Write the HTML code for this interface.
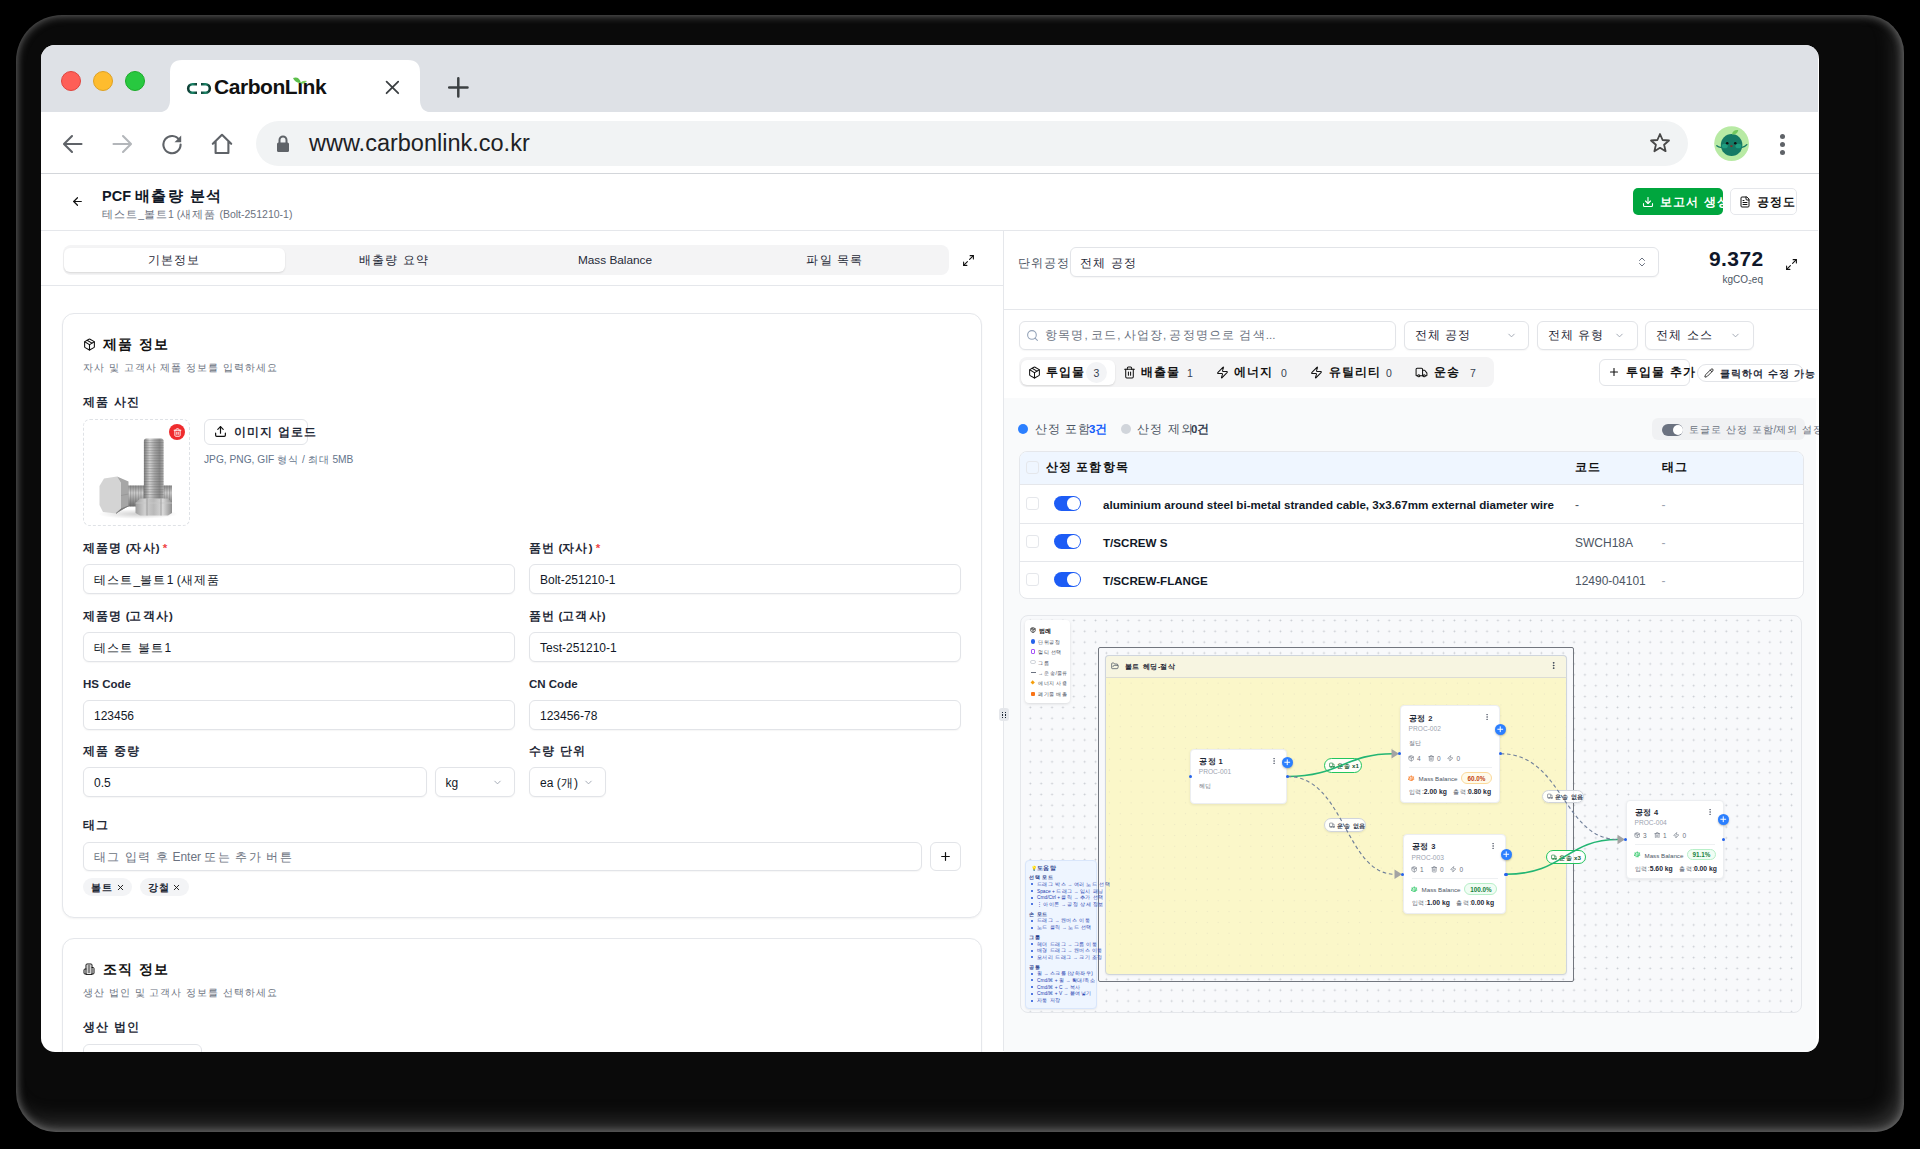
<!DOCTYPE html>
<html><head><meta charset="utf-8">
<style>
*{box-sizing:border-box;margin:0;padding:0}
html,body{width:1920px;height:1149px;overflow:hidden;background:#000}
body{font-family:"Liberation Sans",sans-serif;color:#111827;position:relative}
.a{position:absolute}
.t{white-space:nowrap;line-height:1}
.b{font-weight:bold}
.k{letter-spacing:.1em}
#win{left:41px;top:45px;width:1778px;height:1006.5px;border-radius:14px;overflow:hidden;background:#fff}
#in{left:-41px;top:-45px;width:1920px;height:1149px}
.inp{border:1px solid #e2e4e8;border-radius:6px;background:#fff;box-shadow:0 1px 1.5px rgba(0,0,0,.04)}
</style></head><body>

<div class="a" style="left:16px;top:15px;width:1888px;height:1117px;border-radius:46px 38px 28px 40px;background:#0a0a0a;box-shadow:inset 0 0 9px 1px rgba(140,140,140,.7),inset -10px -14px 22px -6px rgba(120,120,120,.45)"></div>
<div class="a" id="win"><div class="a" id="in">
<div class="a" style="left:41px;top:45px;width:1777px;height:67px;background:#dee1e6"></div>
<div class="a" style="left:61px;top:71px;width:20px;height:20px;border-radius:50%;background:#fe5f57;border:.5px solid #e0443e"></div>
<div class="a" style="left:93px;top:71px;width:20px;height:20px;border-radius:50%;background:#febc2e;border:.5px solid #dea123"></div>
<div class="a" style="left:125px;top:71px;width:20px;height:20px;border-radius:50%;background:#28c840;border:.5px solid #1aab29"></div>
<svg class="a" style="left:150px;top:58px" width="290" height="56" viewBox="150 58 290 56"><path d="M157 112.5 Q170 112.5 170 100 L170 72 Q170 60 182 60 L408 60 Q420 60 420 72 L420 100 Q420 112.5 433 112.5 Z" fill="#fff"/></svg>
<svg class="a" style="left:186px;top:82px" width="26" height="13" viewBox="0 0 26 13"><defs><linearGradient id="lg" x1="0" x2="1"><stop offset="0" stop-color="#0f3d34"/><stop offset=".5" stop-color="#1b8a6b"/><stop offset="1" stop-color="#11352d"/></linearGradient></defs><path d="M11 2.2 H6.5 A4.3 4.3 0 0 0 6.5 10.8 H11" fill="none" stroke="url(#lg)" stroke-width="2.6"/><path d="M15 2.2 H19.5 A4.3 4.3 0 0 1 19.5 10.8 H15" fill="none" stroke="url(#lg)" stroke-width="2.6"/></svg>
<div class="a t b" style="left:214px;top:76px;font-size:21px;color:#111;letter-spacing:-.45px">CarbonL<span style="position:relative">ı</span>nk</div>
<svg class="a" style="left:290px;top:76px" width="18" height="11" viewBox="0 0 18 11"><path d="M3 2 Q9 0 11 7 Q5 7 3 2Z" fill="#5cbf4a"/><path d="M10 7 Q13 4 17 5 Q14 9 10 7Z" fill="#7bcf5c"/></svg>
<svg class="a" style="left:380px;top:75px" width="24" height="24" viewBox="380 75 24 24"><path d="M386.6 81.6 L398.2 93.2 M398.2 81.6 L386.6 93.2" stroke="#3c4043" stroke-width="1.8" stroke-linecap="round"/></svg>
<svg class="a" style="left:440px;top:70px" width="36" height="36" viewBox="440 70 36 36"><path d="M458.3 78.3 V96.6 M449.2 87.4 H467.5" stroke="#3c4043" stroke-width="2.5" stroke-linecap="round"/></svg>
<div class="a" style="left:41px;top:112px;width:1778px;height:62px;background:#fff;border-bottom:1.2px solid #d3d6da"></div>
<div class="a" style="left:256px;top:121px;width:1432px;height:45px;border-radius:23px;background:#f1f3f4"></div>
<div class="a t" style="left:309px;top:132px;font-size:23.5px;color:#202124">www.carbonlink.co.kr</div>
<svg class="a" style="left:62px;top:134px" width="21" height="20" viewBox="0 0 21 20"><path d="M19.5 10 H2.5 M10 2 L2 10 L10 18" fill="none" stroke="#5f6368" stroke-width="2.1" stroke-linecap="round" stroke-linejoin="round"/></svg>
<svg class="a" style="left:112px;top:134px" width="21" height="20" viewBox="0 0 21 20"><path d="M1.5 10 H18.5 M11 2 L19 10 L11 18" fill="none" stroke="#b3b6ba" stroke-width="2.1" stroke-linecap="round" stroke-linejoin="round"/></svg>
<svg class="a" style="left:161px;top:133px" width="22" height="22" viewBox="0 0 22 22"><path d="M18.3 7 A8.6 8.6 0 1 0 19.6 11.5" fill="none" stroke="#5f6368" stroke-width="2.1" stroke-linecap="round"/><path d="M20.2 2.5 V9.2 H13.5 Z" fill="#5f6368"/></svg>
<svg class="a" style="left:211px;top:133px" width="22" height="22" viewBox="0 0 22 22"><path d="M1.8 10.8 L11 1.8 L20.2 10.8 M4.6 8.6 V20 H17.4 V8.6" fill="none" stroke="#5f6368" stroke-width="2.1" stroke-linejoin="round" stroke-linecap="round"/></svg>
<svg class="a" style="left:276px;top:135px" width="14" height="18" viewBox="0 0 14 18"><path d="M3.5 8 V5 A3.5 3.5 0 0 1 10.5 5 V8" fill="none" stroke="#5f6368" stroke-width="2"/><rect x="1" y="7.5" width="12" height="9.5" rx="1.5" fill="#5f6368"/></svg>
<svg class="a" style="left:1649px;top:132px" width="22" height="22" viewBox="0 0 22 22"><path d="M11 2 L13.6 8 L20 8.5 L15.1 12.7 L16.6 19.2 L11 15.8 L5.4 19.2 L6.9 12.7 L2 8.5 L8.4 8 Z" fill="none" stroke="#474747" stroke-width="1.8" stroke-linejoin="round"/></svg>
<svg class="a" style="left:1710px;top:122px" width="45" height="44" viewBox="1710 122 45 44"><circle cx="1731.6" cy="143.6" r="17.4" fill="#b8eaa4"/><path d="M1716.8 145.8 Q1719 147.8 1721.5 147.3 M1742 147.3 Q1745 146.8 1746.8 144.6" fill="none" stroke="#157a65" stroke-width="1.3" stroke-linecap="round"/><ellipse cx="1731.6" cy="145" rx="10.8" ry="11.1" fill="#157a65"/><ellipse cx="1724.8" cy="146" rx="3" ry="2.3" fill="#1f9d7f"/><ellipse cx="1738.4" cy="146" rx="3" ry="2.3" fill="#1f9d7f"/><circle cx="1727.2" cy="143.3" r="1.3" fill="#111"/><circle cx="1735.3" cy="143.3" r="1.3" fill="#111"/><path d="M1730.1 145.6 H1732.7 A1.3 1.3 0 0 1 1730.1 145.6Z" fill="#a01818"/><path d="M1732 134.5 Q1732.5 129.5 1738.3 130 Q1737.5 134.5 1732 134.5Z" fill="#72c85e"/></svg>
<div class="a" style="left:1780px;top:134px;width:5px;height:5px;border-radius:50%;background:#5f6368;box-shadow:0 8px 0 #5f6368,0 16px 0 #5f6368"></div>
<div class="a" style="left:41px;top:174px;width:1777px;height:57px;background:#fff;border-bottom:1px solid #e5e7eb"></div>
<svg class="a" style="left:70.5px;top:194.5px" width="13" height="13" viewBox="0 0 24 24" fill="none" stroke="#111" stroke-width="2.2" stroke-linecap="round" stroke-linejoin="round" ><path d="m12 19-7-7 7-7"/><path d="M19 12H5"/></svg>
<div class="a t" style="left:102px;top:188.54px;font-size:14.5px;font-weight:bold;color:#111827">PCF <span class="k">배출량 분석</span></div>
<div class="a t" style="left:102px;top:208.76px;font-size:10.5px;color:#6b7280"><span class="k">테스트</span>_<span class="k">볼트</span>1 (<span class="k">새제품</span> (Bolt-251210-1)</div>
<div class="a" style="left:1633px;top:188px;width:89.5px;height:27px;border-radius:5px;background:#00a63e"></div>
<svg class="a" style="left:1642.0px;top:195.5px" width="12" height="12" viewBox="0 0 24 24" fill="none" stroke="#fff" stroke-width="2.2" stroke-linecap="round" stroke-linejoin="round" ><path d="M21 15v4a2 2 0 0 1-2 2H5a2 2 0 0 1-2-2v-4"/><path d="M7 10l5 5 5-5"/><path d="M12 15V3"/></svg>
<div class="a t" style="left:1660px;top:196.78px;font-size:11.5px;color:#fff;font-weight:bold"><span class="k">보고서 생성</span></div>
<div class="a" style="left:1730px;top:188px;width:67px;height:27px;border-radius:5px;background:#fff;border:1px solid #e5e7eb"></div>
<svg class="a" style="left:1739.0px;top:195.5px" width="12" height="12" viewBox="0 0 24 24" fill="none" stroke="#111" stroke-width="2" stroke-linecap="round" stroke-linejoin="round" ><path d="M15 2H6a2 2 0 0 0-2 2v16a2 2 0 0 0 2 2h12a2 2 0 0 0 2-2V7Z"/><path d="M14 2v4a2 2 0 0 0 2 2h4"/><path d="M10 9H8"/><path d="M16 13H8"/><path d="M16 17H8"/></svg>
<div class="a t" style="left:1757px;top:196.78px;font-size:11.5px;color:#111;font-weight:bold"><span class="k">공정도</span></div>
<div class="a" style="left:62.5px;top:245px;width:886px;height:30px;border-radius:8px;background:#f4f4f5"></div>
<div class="a" style="left:64px;top:247.5px;width:220.5px;height:24.5px;border-radius:6px;background:#fff;box-shadow:0 1px 2px rgba(0,0,0,.12)"></div>
<div class="a t" style="left:-226px;width:800px;text-align:center;top:254.64px;font-size:11.8px;color:#1f2937"><span class="k">기본정보</span></div>
<div class="a t" style="left:-6px;width:800px;text-align:center;top:254.64px;font-size:11.8px;color:#1f2937"><span class="k">배출량 요약</span></div>
<div class="a t" style="left:215px;width:800px;text-align:center;top:254.64px;font-size:11.8px;color:#1f2937">Mass Balance</div>
<div class="a t" style="left:435px;width:800px;text-align:center;top:254.64px;font-size:11.8px;color:#1f2937"><span class="k">파일 목록</span></div>
<svg class="a" style="left:962.0px;top:253.5px" width="13" height="13" viewBox="0 0 24 24" fill="none" stroke="#111" stroke-width="2" stroke-linecap="round" stroke-linejoin="round" ><path d="M15 3h6v6"/><path d="M9 21H3v-6"/><path d="M21 3l-7 7"/><path d="M3 21l7-7"/></svg>
<div class="a" style="left:41px;top:285px;width:962px;height:1px;background:#e5e7eb"></div>
<div class="a" style="left:1003px;top:231px;width:1px;height:820px;background:#e5e7eb"></div>
<div class="a" style="left:62px;top:313px;width:920px;height:605px;border-radius:12px;border:1px solid #e5e7eb;box-shadow:0 1px 2px rgba(0,0,0,.05);background:#fff"></div>
<svg class="a" style="left:82.5px;top:337.5px" width="13" height="13" viewBox="0 0 24 24" fill="none" stroke="#111" stroke-width="2" stroke-linecap="round" stroke-linejoin="round" ><path d="M11 21.73a2 2 0 0 0 2 0l7-4A2 2 0 0 0 21 16V8a2 2 0 0 0-1-1.73l-7-4a2 2 0 0 0-2 0l-7 4A2 2 0 0 0 3 8v8a2 2 0 0 0 1 1.73z"/><path d="M12 22V12"/><path d="m3.3 7 7.703 4.734a2 2 0 0 0 1.994 0L20.7 7"/><path d="m7.5 4.27 9 5.15"/></svg>
<div class="a t" style="left:103px;top:338.32px;font-size:13.5px;font-weight:bold;color:#111"><span class="k">제품 정보</span></div>
<div class="a t" style="left:83px;top:363.0px;font-size:10px;color:#6b7280"><span class="k">자사 및 고객사 제품 정보를 입력하세요</span></div>
<div class="a t" style="left:83px;top:397.28px;font-size:11.5px;font-weight:bold;color:#1f2937"><span class="k">제품 사진</span></div>
<div class="a" style="left:83px;top:419px;width:107px;height:107px;border:1.5px dashed #dfe2e6;border-radius:7px;background:#fff"></div>
<svg class="a" style="left:84px;top:420px" width="105" height="105" viewBox="84 420 105 105">
<defs>
<linearGradient id="sh" x1="0" x2="1"><stop offset="0" stop-color="#7c7c7c"/><stop offset=".3" stop-color="#d6d6d6"/><stop offset=".55" stop-color="#a8a8a8"/><stop offset=".8" stop-color="#8a8a8a"/><stop offset="1" stop-color="#b0b0b0"/></linearGradient>
<linearGradient id="sh2" x1="0" x2="0" y1="0" y2="1"><stop offset="0" stop-color="#8a8a8a"/><stop offset=".35" stop-color="#d2d2d2"/><stop offset=".7" stop-color="#9a9a9a"/><stop offset="1" stop-color="#6f6f6f"/></linearGradient>
<linearGradient id="hd" x1="0" x2="1"><stop offset="0" stop-color="#9d9d9d"/><stop offset=".25" stop-color="#cfcfcf"/><stop offset=".5" stop-color="#b9b9b9"/><stop offset=".75" stop-color="#d9d9d9"/><stop offset="1" stop-color="#8e8e8e"/></linearGradient>
<pattern id="thv" width="20" height="2.6" patternUnits="userSpaceOnUse"><rect width="20" height="1.2" fill="#5e5e5e" opacity=".35"/></pattern>
<pattern id="thh" width="2.6" height="20" patternUnits="userSpaceOnUse"><rect width="1.2" height="20" fill="#5e5e5e" opacity=".35"/></pattern>
<radialGradient id="shd" cx=".5" cy=".5" r=".5"><stop offset="0" stop-color="#000" stop-opacity=".18"/><stop offset="1" stop-color="#000" stop-opacity="0"/></radialGradient>
</defs>
<ellipse cx="138" cy="514" rx="40" ry="5" fill="url(#shd)"/>
<rect x="126" y="485.5" width="46" height="21" fill="url(#sh2)"/>
<rect x="126" y="485.5" width="46" height="21" fill="url(#thh)"/>
<path d="M104 478.5 L117 476.5 L121 483 L121 509 L116 513.5 L103 512 L99.5 505 L99.5 486 Z" fill="#d4d4d4"/>
<path d="M117 476.5 L128.5 481.5 L128.5 506 L116 513.5 L121 509 L121 483 Z" fill="#a6a6a6"/>
<path d="M121 495.5 L128.5 494" stroke="#8f8f8f" stroke-width=".6"/>
<path d="M116 513.5 L121 509 L128.5 506" fill="#7d7d7d" stroke="#7d7d7d" stroke-width="1"/>
<rect x="143.9" y="438.6" width="19.7" height="62" rx="2.5" fill="url(#sh)"/>
<rect x="143.9" y="440" width="19.7" height="60" fill="url(#thv)"/>
<path d="M140 498.5 L168 498.5 L172 503 L172 513 L168 515.5 L140 515.5 L135.5 513 L135.5 503 Z" fill="url(#hd)"/>
<path d="M135.5 503 H172" stroke="#c8c8c8" stroke-width=".8"/>
<path d="M147 498.5 V515.5 M161 498.5 V515.5" stroke="#8d8d8d" stroke-width=".7"/>
</svg>
<div class="a" style="left:169px;top:424px;width:16px;height:16px;border-radius:50%;background:#ef2b2d"></div>
<svg class="a" style="left:172.5px;top:427.5px" width="9" height="9" viewBox="0 0 24 24" fill="none" stroke="#fff" stroke-width="2.4" stroke-linecap="round" stroke-linejoin="round" ><path d="M3 6h18"/><path d="M19 6v14c0 1-1 2-2 2H7c-1 0-2-1-2-2V6"/><path d="M8 6V4c0-1 1-2 2-2h4c1 0 2 1 2 2v2"/><path d="M10 11v6"/><path d="M14 11v6"/></svg>
<div class="a" style="left:204px;top:419px;width:103.5px;height:26px;border:1px solid #e2e4e8;border-radius:6px;background:#fff"></div>
<svg class="a" style="left:213.5px;top:425.0px" width="13" height="13" viewBox="0 0 24 24" fill="none" stroke="#111" stroke-width="2.2" stroke-linecap="round" stroke-linejoin="round" ><path d="M21 15v4a2 2 0 0 1-2 2H5a2 2 0 0 1-2-2v-4"/><path d="M17 8l-5-5-5 5"/><path d="M12 3v12"/></svg>
<div class="a t" style="left:234px;top:426.78px;font-size:11.5px;font-weight:bold;color:#1f2937"><span class="k">이미지 업로드</span></div>
<div class="a t" style="left:204px;top:454.9px;font-size:10.2px;color:#64748b">JPG, PNG, GIF <span class="k">형식</span> / <span class="k">최대</span> 5MB</div>
<div class="a t" style="left:83px;top:543.28px;font-size:11.5px;font-weight:bold;color:#1f2937"><span class="k">제품명</span> (<span class="k">자사</span>) <i style="color:#ef4444;font-style:normal">*</i></div>
<div class="a t" style="left:529px;top:543.28px;font-size:11.5px;font-weight:bold;color:#1f2937"><span class="k">품번</span> (<span class="k">자사</span>) <i style="color:#ef4444;font-style:normal">*</i></div>
<div class="a" style="left:83px;top:564px;width:431.5px;height:30px;border:1px solid #e2e4e8;border-radius:6px;background:#fff;box-shadow:0 1px 1.5px rgba(0,0,0,.04)"></div>
<div class="a t" style="left:94px;top:574.04px;font-size:12px;color:#111827"><span class="k">테스트</span>_<span class="k">볼트</span>1 (<span class="k">새제품</span></div>
<div class="a" style="left:529px;top:564px;width:431.5px;height:30px;border:1px solid #e2e4e8;border-radius:6px;background:#fff;box-shadow:0 1px 1.5px rgba(0,0,0,.04)"></div>
<div class="a t" style="left:540px;top:574.04px;font-size:12px;color:#111827">Bolt-251210-1</div>
<div class="a t" style="left:83px;top:610.98px;font-size:11.5px;font-weight:bold;color:#1f2937"><span class="k">제품명</span> (<span class="k">고객사</span>)</div>
<div class="a t" style="left:529px;top:610.98px;font-size:11.5px;font-weight:bold;color:#1f2937"><span class="k">품번</span> (<span class="k">고객사</span>)</div>
<div class="a" style="left:83px;top:631.5px;width:431.5px;height:30px;border:1px solid #e2e4e8;border-radius:6px;background:#fff;box-shadow:0 1px 1.5px rgba(0,0,0,.04)"></div>
<div class="a t" style="left:94px;top:641.54px;font-size:12px;color:#111827"><span class="k">테스트 볼트</span>1</div>
<div class="a" style="left:529px;top:631.5px;width:431.5px;height:30px;border:1px solid #e2e4e8;border-radius:6px;background:#fff;box-shadow:0 1px 1.5px rgba(0,0,0,.04)"></div>
<div class="a t" style="left:540px;top:641.54px;font-size:12px;color:#111827">Test-251210-1</div>
<div class="a t" style="left:83px;top:678.68px;font-size:11.5px;font-weight:bold;color:#1f2937">HS Code</div>
<div class="a t" style="left:529px;top:678.68px;font-size:11.5px;font-weight:bold;color:#1f2937">CN Code</div>
<div class="a" style="left:83px;top:699.5px;width:431.5px;height:30px;border:1px solid #e2e4e8;border-radius:6px;background:#fff;box-shadow:0 1px 1.5px rgba(0,0,0,.04)"></div>
<div class="a t" style="left:94px;top:709.54px;font-size:12px;color:#111827">123456</div>
<div class="a" style="left:529px;top:699.5px;width:431.5px;height:30px;border:1px solid #e2e4e8;border-radius:6px;background:#fff;box-shadow:0 1px 1.5px rgba(0,0,0,.04)"></div>
<div class="a t" style="left:540px;top:709.54px;font-size:12px;color:#111827">123456-78</div>
<div class="a t" style="left:83px;top:746.08px;font-size:11.5px;font-weight:bold;color:#1f2937"><span class="k">제품 중량</span></div>
<div class="a t" style="left:529px;top:746.08px;font-size:11.5px;font-weight:bold;color:#1f2937"><span class="k">수량 단위</span></div>
<div class="a" style="left:83px;top:767px;width:343.5px;height:30px;border:1px solid #e2e4e8;border-radius:6px;background:#fff;box-shadow:0 1px 1.5px rgba(0,0,0,.04)"></div>
<div class="a t" style="left:94px;top:777.04px;font-size:12px;color:#111827">0.5</div>
<div class="a" style="left:434.5px;top:767px;width:80px;height:30px;border:1px solid #e2e4e8;border-radius:6px;background:#fff;box-shadow:0 1px 1.5px rgba(0,0,0,.04)"></div>
<div class="a t" style="left:445.5px;top:777.04px;font-size:12px;color:#111827">kg</div>
<svg class="a" style="left:492.0px;top:776.5px" width="11" height="11" viewBox="0 0 24 24" fill="none" stroke="#9ca3af" stroke-width="2" stroke-linecap="round" stroke-linejoin="round" ><path d="m6 9 6 6 6-6"/></svg>
<div class="a" style="left:529px;top:767px;width:76.5px;height:30px;border:1px solid #e2e4e8;border-radius:6px;background:#fff;box-shadow:0 1px 1.5px rgba(0,0,0,.04)"></div>
<div class="a t" style="left:540px;top:777.04px;font-size:12px;color:#111827">ea (<span class="k">개</span>)</div>
<svg class="a" style="left:583.0px;top:776.5px" width="11" height="11" viewBox="0 0 24 24" fill="none" stroke="#9ca3af" stroke-width="2" stroke-linecap="round" stroke-linejoin="round" ><path d="m6 9 6 6 6-6"/></svg>
<div class="a t" style="left:83px;top:820.28px;font-size:11.5px;font-weight:bold;color:#1f2937"><span class="k">태그</span></div>
<div class="a" style="left:83px;top:841.5px;width:838.5px;height:29.5px;border:1px solid #e2e4e8;border-radius:6px;background:#fff;box-shadow:0 1px 1.5px rgba(0,0,0,.04)"></div>
<div class="a t" style="left:94px;top:851.29px;font-size:12px;color:#6b7280"><span class="k">태그 입력 후</span> Enter <span class="k">또는 추가 버튼</span></div>
<div class="a" style="left:929.5px;top:841.5px;width:31px;height:29.5px;border:1px solid #e2e4e8;border-radius:6px;background:#fff"></div>
<svg class="a" style="left:938.5px;top:849.5px" width="13" height="13" viewBox="0 0 24 24" fill="none" stroke="#111" stroke-width="2.2" stroke-linecap="round" stroke-linejoin="round" ><path d="M5 12h14"/><path d="M12 5v14"/></svg>
<div class="a" style="left:83px;top:878px;width:49px;height:18px;border-radius:9px;background:#f3f4f6"></div>
<div class="a t" style="left:91px;top:883.0px;font-size:10px;font-weight:bold;color:#1f2937"><span class="k">볼트</span></div>
<svg class="a" style="left:115.5px;top:882.5px" width="9" height="9" viewBox="0 0 24 24" fill="none" stroke="#111" stroke-width="2.4" stroke-linecap="round" stroke-linejoin="round" ><path d="M18 6 6 18"/><path d="m6 6 12 12"/></svg>
<div class="a" style="left:139.5px;top:878px;width:49px;height:18px;border-radius:9px;background:#f3f4f6"></div>
<div class="a t" style="left:147.5px;top:883.0px;font-size:10px;font-weight:bold;color:#1f2937"><span class="k">강철</span></div>
<svg class="a" style="left:172.0px;top:882.5px" width="9" height="9" viewBox="0 0 24 24" fill="none" stroke="#111" stroke-width="2.4" stroke-linecap="round" stroke-linejoin="round" ><path d="M18 6 6 18"/><path d="m6 6 12 12"/></svg>
<div class="a" style="left:62px;top:938px;width:920px;height:200px;border-radius:12px;border:1px solid #e5e7eb;box-shadow:0 1px 2px rgba(0,0,0,.05);background:#fff"></div>
<svg class="a" style="left:83.0px;top:963.0px" width="12" height="12" viewBox="0 0 24 24" fill="none" stroke="#111" stroke-width="2" stroke-linecap="round" stroke-linejoin="round" ><path d="M6 22V4a2 2 0 0 1 2-2h8a2 2 0 0 1 2 2v18Z"/><path d="M6 12H4a2 2 0 0 0-2 2v6a2 2 0 0 0 2 2h2"/><path d="M18 9h2a2 2 0 0 1 2 2v9a2 2 0 0 1-2 2h-2"/><path d="M10 6h4"/><path d="M10 10h4"/><path d="M10 14h4"/><path d="M10 18h4"/></svg>
<div class="a t" style="left:103px;top:963.32px;font-size:13.5px;font-weight:bold;color:#111"><span class="k">조직 정보</span></div>
<div class="a t" style="left:83px;top:988.0px;font-size:10px;color:#6b7280"><span class="k">생산 법인 및 고객사 정보를 선택하세요</span></div>
<div class="a t" style="left:83px;top:1022.28px;font-size:11.5px;font-weight:bold;color:#1f2937"><span class="k">생산 법인</span></div>
<div class="a" style="left:83px;top:1044px;width:119px;height:30px;border:1px solid #e2e4e8;border-radius:6px;background:#fff"></div>
<div class="a t" style="left:1017.5px;top:256.54px;font-size:12px;color:#4b5563"><span class="k">단위공정</span>:</div>
<div class="a" style="left:1069.5px;top:246.5px;width:589.5px;height:30px;border:1px solid #e2e4e8;border-radius:6px;background:#fff;box-shadow:0 1px 1.5px rgba(0,0,0,.04)"></div>
<div class="a t" style="left:1080px;top:256.54px;font-size:12px;color:#1f2937"><span class="k">전체 공정</span></div>
<svg class="a" style="left:1635.5px;top:255.5px" width="12" height="12" viewBox="0 0 24 24" fill="none" stroke="#6b7280" stroke-width="2" stroke-linecap="round" stroke-linejoin="round" ><path d="m7 15 5 5 5-5"/><path d="m7 9 5-5 5 5"/></svg>
<div class="a t" style="left:963.5999999999999px;width:800px;text-align:right;top:247.72px;font-size:21px;font-weight:bold;color:#0f172a;letter-spacing:.4px">9.372</div>
<div class="a t" style="left:963px;width:800px;text-align:right;top:274.5px;font-size:10px;color:#4b5563">kgCO₂eq</div>
<svg class="a" style="left:1784.5px;top:258.0px" width="13" height="13" viewBox="0 0 24 24" fill="none" stroke="#111" stroke-width="2" stroke-linecap="round" stroke-linejoin="round" ><path d="M15 3h6v6"/><path d="M9 21H3v-6"/><path d="M21 3l-7 7"/><path d="M3 21l7-7"/></svg>
<div class="a" style="left:1004px;top:309px;width:814px;height:1px;background:#e5e7eb"></div>
<div class="a" style="left:1018.5px;top:320.5px;width:377px;height:29.5px;border:1px solid #e2e4e8;border-radius:6px;background:#fff;box-shadow:0 1px 1.5px rgba(0,0,0,.04)"></div>
<svg class="a" style="left:1026.0px;top:328.5px" width="13" height="13" viewBox="0 0 24 24" fill="none" stroke="#94a3b8" stroke-width="2" stroke-linecap="round" stroke-linejoin="round" ><circle cx="11" cy="11" r="8"/><path d="m21 21-4.3-4.3"/></svg>
<div class="a t" style="left:1045px;top:330.28px;font-size:11.5px;color:#6b7280"><span class="k">항목명</span>, <span class="k">코드</span>, <span class="k">사업장</span>, <span class="k">공정명으로 검색</span>...</div>
<div class="a" style="left:1403.5px;top:320.5px;width:125.5px;height:29.5px;border:1px solid #e2e4e8;border-radius:6px;background:#fff;box-shadow:0 1px 1.5px rgba(0,0,0,.04)"></div>
<div class="a t" style="left:1414.5px;top:330.28px;font-size:11.5px;color:#1f2937"><span class="k">전체 공정</span></div>
<svg class="a" style="left:1505.5px;top:329.5px" width="11" height="11" viewBox="0 0 24 24" fill="none" stroke="#9ca3af" stroke-width="2" stroke-linecap="round" stroke-linejoin="round" ><path d="m6 9 6 6 6-6"/></svg>
<div class="a" style="left:1536.5px;top:320.5px;width:101px;height:29.5px;border:1px solid #e2e4e8;border-radius:6px;background:#fff;box-shadow:0 1px 1.5px rgba(0,0,0,.04)"></div>
<div class="a t" style="left:1547.5px;top:330.28px;font-size:11.5px;color:#1f2937"><span class="k">전체 유형</span></div>
<svg class="a" style="left:1614.0px;top:329.5px" width="11" height="11" viewBox="0 0 24 24" fill="none" stroke="#9ca3af" stroke-width="2" stroke-linecap="round" stroke-linejoin="round" ><path d="m6 9 6 6 6-6"/></svg>
<div class="a" style="left:1645px;top:320.5px;width:108.5px;height:29.5px;border:1px solid #e2e4e8;border-radius:6px;background:#fff;box-shadow:0 1px 1.5px rgba(0,0,0,.04)"></div>
<div class="a t" style="left:1656px;top:330.28px;font-size:11.5px;color:#1f2937"><span class="k">전체 소스</span></div>
<svg class="a" style="left:1730.0px;top:329.5px" width="11" height="11" viewBox="0 0 24 24" fill="none" stroke="#9ca3af" stroke-width="2" stroke-linecap="round" stroke-linejoin="round" ><path d="m6 9 6 6 6-6"/></svg>
<div class="a" style="left:1018.5px;top:357px;width:475px;height:30px;border-radius:8px;background:#f4f4f5"></div>
<div class="a" style="left:1020.5px;top:360px;width:94.5px;height:24.5px;border-radius:6px;background:#fff;box-shadow:0 1px 2px rgba(0,0,0,.12)"></div>
<svg class="a" style="left:1028.0px;top:365.5px" width="13" height="13" viewBox="0 0 24 24" fill="none" stroke="#111" stroke-width="1.9" stroke-linecap="round" stroke-linejoin="round" ><path d="M11 21.73a2 2 0 0 0 2 0l7-4A2 2 0 0 0 21 16V8a2 2 0 0 0-1-1.73l-7-4a2 2 0 0 0-2 0l-7 4A2 2 0 0 0 3 8v8a2 2 0 0 0 1 1.73z"/><path d="M12 22V12"/><path d="m3.3 7 7.703 4.734a2 2 0 0 0 1.994 0L20.7 7"/><path d="m7.5 4.27 9 5.15"/></svg>
<div class="a t" style="left:1046px;top:367.28px;font-size:11.5px;font-weight:bold;color:#111"><span class="k">투입물</span></div>
<div class="a" style="left:1086px;top:362px;width:21px;height:21px;border-radius:50%;background:#f3f4f6"></div>
<div class="a t" style="left:696.5px;width:800px;text-align:center;top:367.76px;font-size:10.5px;color:#374151">3</div>
<svg class="a" style="left:1122.5px;top:365.5px" width="13" height="13" viewBox="0 0 24 24" fill="none" stroke="#111" stroke-width="1.9" stroke-linecap="round" stroke-linejoin="round" ><path d="M3 6h18"/><path d="M19 6v14c0 1-1 2-2 2H7c-1 0-2-1-2-2V6"/><path d="M8 6V4c0-1 1-2 2-2h4c1 0 2 1 2 2v2"/><path d="M10 11v6"/><path d="M14 11v6"/></svg>
<div class="a t" style="left:1141px;top:367.28px;font-size:11.5px;font-weight:bold;color:#111"><span class="k">배출물</span></div>
<div class="a t" style="left:790px;width:800px;text-align:center;top:367.76px;font-size:10.5px;color:#374151">1</div>
<svg class="a" style="left:1215.5px;top:365.5px" width="13" height="13" viewBox="0 0 24 24" fill="none" stroke="#111" stroke-width="1.9" stroke-linecap="round" stroke-linejoin="round" ><path d="M4 14a1 1 0 0 1-.78-1.63l9.9-10.2a.5.5 0 0 1 .86.46l-1.92 6.02A1 1 0 0 0 13 10h7a1 1 0 0 1 .78 1.63l-9.9 10.2a.5.5 0 0 1-.86-.46l1.92-6.02A1 1 0 0 0 11 14z"/></svg>
<div class="a t" style="left:1234px;top:367.28px;font-size:11.5px;font-weight:bold;color:#111"><span class="k">에너지</span></div>
<div class="a t" style="left:884px;width:800px;text-align:center;top:367.76px;font-size:10.5px;color:#374151">0</div>
<svg class="a" style="left:1309.5px;top:365.5px" width="13" height="13" viewBox="0 0 24 24" fill="none" stroke="#111" stroke-width="1.9" stroke-linecap="round" stroke-linejoin="round" ><path d="M4 14a1 1 0 0 1-.78-1.63l9.9-10.2a.5.5 0 0 1 .86.46l-1.92 6.02A1 1 0 0 0 13 10h7a1 1 0 0 1 .78 1.63l-9.9 10.2a.5.5 0 0 1-.86-.46l1.92-6.02A1 1 0 0 0 11 14z"/></svg>
<div class="a t" style="left:1329px;top:367.28px;font-size:11.5px;font-weight:bold;color:#111"><span class="k">유틸리티</span></div>
<div class="a t" style="left:989px;width:800px;text-align:center;top:367.76px;font-size:10.5px;color:#374151">0</div>
<svg class="a" style="left:1415.0px;top:365.5px" width="13" height="13" viewBox="0 0 24 24" fill="none" stroke="#111" stroke-width="1.9" stroke-linecap="round" stroke-linejoin="round" ><path d="M14 18V6a2 2 0 0 0-2-2H4a2 2 0 0 0-2 2v11a1 1 0 0 0 1 1h2"/><path d="M15 18H9"/><path d="M19 18h2a1 1 0 0 0 1-1v-3.65a1 1 0 0 0-.22-.624l-3.48-4.35A1 1 0 0 0 17.52 8H14"/><circle cx="17" cy="18" r="2"/><circle cx="7" cy="18" r="2"/></svg>
<div class="a t" style="left:1434px;top:367.28px;font-size:11.5px;font-weight:bold;color:#111"><span class="k">운송</span></div>
<div class="a t" style="left:1073px;width:800px;text-align:center;top:367.76px;font-size:10.5px;color:#374151">7</div>
<div class="a" style="left:1598.5px;top:359px;width:91px;height:26.5px;border:1px solid #e2e4e8;border-radius:6px;background:#fff"></div>
<svg class="a" style="left:1608.0px;top:366.0px" width="12" height="12" viewBox="0 0 24 24" fill="none" stroke="#111" stroke-width="2.2" stroke-linecap="round" stroke-linejoin="round" ><path d="M5 12h14"/><path d="M12 5v14"/></svg>
<div class="a t" style="left:1626px;top:367.28px;font-size:11.5px;font-weight:bold;color:#111"><span class="k">투입물 추가</span></div>
<div class="a" style="left:1697px;top:363.5px;width:106.5px;height:18px;border:1px solid #e2e4e8;border-radius:9px;background:#fff"></div>
<svg class="a" style="left:1703.5px;top:367.5px" width="10" height="10" viewBox="0 0 24 24" fill="none" stroke="#111" stroke-width="2" stroke-linecap="round" stroke-linejoin="round" ><path d="M21.174 6.812a1 1 0 0 0-3.986-3.987L3.842 16.174a2 2 0 0 0-.5.83l-1.321 4.352a.5.5 0 0 0 .623.622l4.353-1.32a2 2 0 0 0 .83-.497z"/><path d="m15 5 4 4"/></svg>
<div class="a t" style="left:1720px;top:368.5px;font-size:10px;font-weight:bold;color:#1f2937"><span class="k">클릭하여 수정 가능</span></div>
<div class="a" style="left:1004px;top:397.5px;width:812px;height:654px;background:#f9fafb"></div>
<div class="a" style="left:1017.5px;top:423.5px;width:10px;height:10px;border-radius:50%;background:#2b7fff"></div>
<div class="a t" style="left:1034.5px;top:423.78px;font-size:11.5px;color:#4b5563"><span class="k">산정 포함</span>:</div>
<div class="a t" style="left:1089px;top:423.78px;font-size:11.5px;color:#155dfc;font-weight:bold">3<span class="k">건</span></div>
<div class="a" style="left:1120.5px;top:423.5px;width:10px;height:10px;border-radius:50%;background:#d1d5db"></div>
<div class="a t" style="left:1137px;top:423.78px;font-size:11.5px;color:#4b5563"><span class="k">산정 제외</span>:</div>
<div class="a t" style="left:1191px;top:423.78px;font-size:11.5px;color:#374151;font-weight:bold">0<span class="k">건</span></div>
<div class="a" style="left:1652px;top:418px;width:152.5px;height:21.5px;border-radius:6px;background:#f0f1f3"></div>
<div class="a" style="left:1662px;top:423.5px;width:21px;height:12px;border-radius:6px;background:#6b7280"></div>
<div class="a" style="left:1673px;top:424.5px;width:10px;height:10px;border-radius:50%;background:#fff"></div>
<div class="a t" style="left:1689px;top:425.0px;font-size:10px;color:#6b7280"><span class="k">토글로 산정 포함</span>/<span class="k">제외 설정</span></div>
<div class="a" style="left:1018.5px;top:450.5px;width:785.5px;height:148px;border-radius:8px;border:1px solid #e5e7eb;background:#fff;overflow:hidden">
<div class="a" style="left:0;top:0;width:786px;height:33.5px;background:#eff6ff;border-bottom:1px solid #e5e7eb"></div>
<div class="a" style="left:0;top:71.5px;width:786px;height:1px;background:#e5e7eb"></div>
<div class="a" style="left:0;top:109.5px;width:786px;height:1px;background:#e5e7eb"></div>
</div>
<div class="a" style="left:1025.5px;top:460.5px;width:13px;height:13px;border:1px solid #e5e7eb;border-radius:3px;background:#eff6ff"></div>
<div class="a t" style="left:1045.5px;top:462.28px;font-size:11.5px;font-weight:bold;color:#111"><span class="k">산정 포함</span></div>
<div class="a t" style="left:1103px;top:462.28px;font-size:11.5px;font-weight:bold;color:#111"><span class="k">항목</span></div>
<div class="a t" style="left:1575px;top:462.28px;font-size:11.5px;font-weight:bold;color:#111"><span class="k">코드</span></div>
<div class="a t" style="left:1661.5px;top:462.28px;font-size:11.5px;font-weight:bold;color:#111"><span class="k">태그</span></div>
<div class="a" style="left:1025.5px;top:497.0px;width:13px;height:13px;border:1px solid #e5e7eb;border-radius:3px;background:#fff"></div>
<div class="a" style="left:1054px;top:495.7px;width:27px;height:15.6px;border-radius:8px;background:#1d5cf5"></div>
<div class="a" style="left:1067px;top:497.2px;width:12.5px;height:12.5px;border-radius:50%;background:#fff"></div>
<div class="a t" style="left:1103px;top:498.73px;font-size:11.6px;color:#111827;font-weight:bold">aluminium around steel bi-metal stranded cable, 3x3.67mm external diameter wire</div>
<div class="a t" style="left:1575px;top:498.54px;font-size:12px;color:#4b5563">-</div>
<div class="a t" style="left:1661.5px;top:498.54px;font-size:12px;color:#9ca3af">-</div>
<div class="a" style="left:1025.5px;top:535.0px;width:13px;height:13px;border:1px solid #e5e7eb;border-radius:3px;background:#fff"></div>
<div class="a" style="left:1054px;top:533.7px;width:27px;height:15.6px;border-radius:8px;background:#1d5cf5"></div>
<div class="a" style="left:1067px;top:535.2px;width:12.5px;height:12.5px;border-radius:50%;background:#fff"></div>
<div class="a t" style="left:1103px;top:536.73px;font-size:11.6px;color:#111827;font-weight:bold">T/SCREW S</div>
<div class="a t" style="left:1575px;top:536.54px;font-size:12px;color:#4b5563">SWCH18A</div>
<div class="a t" style="left:1661.5px;top:536.54px;font-size:12px;color:#9ca3af">-</div>
<div class="a" style="left:1025.5px;top:573.0px;width:13px;height:13px;border:1px solid #e5e7eb;border-radius:3px;background:#fff"></div>
<div class="a" style="left:1054px;top:571.7px;width:27px;height:15.6px;border-radius:8px;background:#1d5cf5"></div>
<div class="a" style="left:1067px;top:573.2px;width:12.5px;height:12.5px;border-radius:50%;background:#fff"></div>
<div class="a t" style="left:1103px;top:574.73px;font-size:11.6px;color:#111827;font-weight:bold">T/SCREW-FLANGE</div>
<div class="a t" style="left:1575px;top:574.54px;font-size:12px;color:#4b5563">12490-04101</div>
<div class="a t" style="left:1661.5px;top:574.54px;font-size:12px;color:#9ca3af">-</div>
<div class="a" style="left:1019.5px;top:615px;width:782px;height:398px;border-radius:8px;border:1px solid #e5e7eb;background-color:#f8f9fb;background-image:radial-gradient(circle,#c6cad0 0.8px,transparent 1.1px);background-size:10.88px 10.88px;background-position:-7px -1px"></div>
<div class="a" style="left:1097.5px;top:647.2px;width:476px;height:334.5px;border:1.6px solid #72767e;border-radius:2px"></div>
<div class="a" style="left:1104.5px;top:654.5px;width:462px;height:320px;border-radius:4px;border:1px solid #cfd5dd;background-color:#fbf7c9;background-image:radial-gradient(circle,#ece7c3 0.7px,transparent 1px);background-size:10.88px 10.88px;background-position:-2px 0px;box-shadow:0 1px 2px rgba(0,0,0,.06)"></div>
<div class="a" style="left:1104.5px;top:654.5px;width:462px;height:23px;border-radius:4px 4px 0 0;background:#f7f5e1;border:1px solid #cfd5dd;border-bottom:1.5px solid #dcdcd4"></div>
<svg class="a" style="left:1110.5px;top:661.5px" width="8" height="8" viewBox="0 0 24 24" fill="none" stroke="#374151" stroke-width="2" stroke-linecap="round" stroke-linejoin="round" ><path d="m6 14 1.5-2.9A2 2 0 0 1 9.24 10H20a2 2 0 0 1 1.94 2.5l-1.54 6a2 2 0 0 1-1.95 1.5H4a2 2 0 0 1-2-2V5a2 2 0 0 1 2-2h3.9a2 2 0 0 1 1.69.9l.81 1.2a2 2 0 0 0 1.67.9H18a2 2 0 0 1 2 2v2"/></svg>
<div class="a t" style="left:1124.5px;top:662.94px;font-size:7px;color:#1f2937;font-weight:bold"><span class="k">볼트 헤딩</span>-<span class="k">절삭</span></div>
<svg class="a" style="left:1548.5px;top:661.0px" width="9" height="9" viewBox="0 0 24 24" fill="none" stroke="#374151" stroke-width="2.6" stroke-linecap="round" stroke-linejoin="round" ><circle cx="12" cy="5" r="1"/><circle cx="12" cy="12" r="1"/><circle cx="12" cy="19" r="1"/></svg>
<div class="a" style="left:1024.5px;top:620px;width:45px;height:82.5px;border-radius:4px;background:#fff;box-shadow:0 1px 3px rgba(0,0,0,.12)"></div>
<svg class="a" style="left:1029.8px;top:627.2px" width="6" height="6" viewBox="0 0 24 24" fill="none" stroke="#111" stroke-width="2.5" stroke-linecap="round" stroke-linejoin="round" ><path d="M11 21.73a2 2 0 0 0 2 0l7-4A2 2 0 0 0 21 16V8a2 2 0 0 0-1-1.73l-7-4a2 2 0 0 0-2 0l-7 4A2 2 0 0 0 3 8v8a2 2 0 0 0 1 1.73z"/><path d="M12 22V12"/><path d="m3.3 7 7.703 4.734a2 2 0 0 0 1.994 0L20.7 7"/><path d="m7.5 4.27 9 5.15"/></svg>
<div class="a t" style="left:1038.5px;top:628.42px;font-size:6px;font-weight:bold;color:#111"><span class="k">범례</span></div>
<div class="a" style="left:1030.6px;top:639px;width:4.5px;height:4.5px;border-radius:50%;background:#2563eb"></div>
<div class="a t" style="left:1038px;top:639.7px;font-size:5px;color:#374151"><span class="k">단위공정</span></div>
<div class="a" style="left:1030.6px;top:649.4px;width:4.5px;height:4.5px;border-radius:1px;border:1px solid #a855f7"></div>
<div class="a t" style="left:1038px;top:650.1px;font-size:5px;color:#374151"><span class="k">멀티 선택</span></div>
<div class="a" style="left:1030px;top:659.9px;width:5.5px;height:4.5px;border-radius:2px;border:.8px solid #d1d5db"></div>
<div class="a t" style="left:1038px;top:660.5px;font-size:5px;color:#374151"><span class="k">그룹</span></div>
<div class="a" style="left:1030.5px;top:672.3px;width:5px;height:0.8px;background:#6b7280"></div>
<div class="a t" style="left:1038px;top:671.0px;font-size:5px;color:#374151">→ <span class="k">운송</span>/<span class="k">물류</span></div>
<div class="a" style="left:1031.3px;top:681.3px;width:3.4px;height:3.4px;background:#f59e0b;transform:rotate(45deg)"></div>
<div class="a t" style="left:1038px;top:681.4px;font-size:5px;color:#374151"><span class="k">에너지 사용</span></div>
<div class="a" style="left:1031px;top:691.5px;width:4px;height:4px;border-radius:1px;background:#f97316"></div>
<div class="a t" style="left:1038px;top:691.9px;font-size:5px;color:#374151"><span class="k">폐기물 배출</span></div>
<div class="a" style="left:1024.5px;top:860px;width:72.5px;height:148.5px;border-radius:4px;background:#eef5ff;border:1px solid #d9e6fb;box-shadow:0 1px 2px rgba(0,0,0,.06)"></div>
<div class="a t" style="left:1031px;top:866.4px;font-size:5px;">💡</div>
<div class="a t" style="left:1036.5px;top:866.16px;font-size:5.5px;color:#1e3a8a;font-weight:bold"><span class="k">도움말</span></div>
<div class="a t" style="left:1029px;top:875.26px;font-size:5.3px;color:#1e3a8a;font-weight:bold"><span class="k">선택 모드</span></div>
<div class="a" style="left:1030.6px;top:883.2px;width:2px;height:2px;border-radius:50%;background:#1d4ed8"></div>
<div class="a t" style="left:1037px;top:882.7px;font-size:4.8px;color:#1e40af"><span class="k">드래그 박스</span> → <span class="k">여러 노드 선택</span></div>
<div class="a" style="left:1030.6px;top:890px;width:2px;height:2px;border-radius:50%;background:#1d4ed8"></div>
<div class="a t" style="left:1037px;top:889.5px;font-size:4.8px;color:#1e40af">Space + <span class="k">드래그</span> → <span class="k">임시 패닝</span></div>
<div class="a" style="left:1030.6px;top:896.7px;width:2px;height:2px;border-radius:50%;background:#1d4ed8"></div>
<div class="a t" style="left:1037px;top:896.2px;font-size:4.8px;color:#1e40af">Cmd/Ctrl + <span class="k">클릭</span> → <span class="k">추가 선택</span></div>
<div class="a" style="left:1030.6px;top:903.4px;width:2px;height:2px;border-radius:50%;background:#1d4ed8"></div>
<div class="a t" style="left:1037px;top:902.9px;font-size:4.8px;color:#1e40af">⋮ <span class="k">아이콘</span> → <span class="k">공정 상세 정보</span></div>
<div class="a t" style="left:1029px;top:911.56px;font-size:5.3px;color:#1e3a8a;font-weight:bold"><span class="k">손 모드</span></div>
<div class="a" style="left:1030.6px;top:919.8px;width:2px;height:2px;border-radius:50%;background:#1d4ed8"></div>
<div class="a t" style="left:1037px;top:919.3px;font-size:4.8px;color:#1e40af"><span class="k">드래그</span> → <span class="k">캔버스 이동</span></div>
<div class="a" style="left:1030.6px;top:926.7px;width:2px;height:2px;border-radius:50%;background:#1d4ed8"></div>
<div class="a t" style="left:1037px;top:926.2px;font-size:4.8px;color:#1e40af"><span class="k">노드 클릭</span> → <span class="k">노드 선택</span></div>
<div class="a t" style="left:1029px;top:934.56px;font-size:5.3px;color:#1e3a8a;font-weight:bold"><span class="k">그룹</span></div>
<div class="a" style="left:1030.6px;top:943px;width:2px;height:2px;border-radius:50%;background:#1d4ed8"></div>
<div class="a t" style="left:1037px;top:942.5px;font-size:4.8px;color:#1e40af"><span class="k">헤더 드래그</span> → <span class="k">그룹 이동</span></div>
<div class="a" style="left:1030.6px;top:949.8px;width:2px;height:2px;border-radius:50%;background:#1d4ed8"></div>
<div class="a t" style="left:1037px;top:949.3px;font-size:4.8px;color:#1e40af"><span class="k">배경 드래그</span> → <span class="k">캔버스 이동</span></div>
<div class="a" style="left:1030.6px;top:956.3px;width:2px;height:2px;border-radius:50%;background:#1d4ed8"></div>
<div class="a t" style="left:1037px;top:955.8px;font-size:4.8px;color:#1e40af"><span class="k">모서리 드래그</span> → <span class="k">크기 조정</span></div>
<div class="a t" style="left:1029px;top:964.56px;font-size:5.3px;color:#1e3a8a;font-weight:bold"><span class="k">공통</span></div>
<div class="a" style="left:1030.6px;top:972.8px;width:2px;height:2px;border-radius:50%;background:#1d4ed8"></div>
<div class="a t" style="left:1037px;top:972.3px;font-size:4.8px;color:#1e40af"><span class="k">휠</span> → <span class="k">스크롤</span> (<span class="k">상하좌우</span>)</div>
<div class="a" style="left:1030.6px;top:979.4px;width:2px;height:2px;border-radius:50%;background:#1d4ed8"></div>
<div class="a t" style="left:1037px;top:978.9px;font-size:4.8px;color:#1e40af">Cmd/⌘ + <span class="k">휠</span> → <span class="k">확대</span>/<span class="k">축소</span></div>
<div class="a" style="left:1030.6px;top:986.1px;width:2px;height:2px;border-radius:50%;background:#1d4ed8"></div>
<div class="a t" style="left:1037px;top:985.6px;font-size:4.8px;color:#1e40af">Cmd/⌘ + C → <span class="k">복사</span></div>
<div class="a" style="left:1030.6px;top:992.8px;width:2px;height:2px;border-radius:50%;background:#1d4ed8"></div>
<div class="a t" style="left:1037px;top:992.3px;font-size:4.8px;color:#1e40af">Cmd/⌘ + V → <span class="k">붙여넣기</span></div>
<div class="a" style="left:1030.6px;top:999.6px;width:2px;height:2px;border-radius:50%;background:#1d4ed8"></div>
<div class="a t" style="left:1037px;top:999.1px;font-size:4.8px;color:#1e40af"><span class="k">자동 저장</span></div>
<div class="a" style="left:1324px;top:757.6px;width:38.40000000000009px;height:15.0px;border-radius:8px;border:1.5px solid #22c55e;background:rgba(255,255,255,.85)"></div>
<svg class="a" style="left:1328.75px;top:761.85px" width="6.5" height="6.5" viewBox="0 0 24 24" fill="none" stroke="#15803d" stroke-width="2.4" stroke-linecap="round" stroke-linejoin="round" ><path d="M14 18V6a2 2 0 0 0-2-2H4a2 2 0 0 0-2 2v11a1 1 0 0 0 1 1h2"/><path d="M15 18H9"/><path d="M19 18h2a1 1 0 0 0 1-1v-3.65a1 1 0 0 0-.22-.624l-3.48-4.35A1 1 0 0 0 17.52 8H14"/><circle cx="17" cy="18" r="2"/><circle cx="7" cy="18" r="2"/></svg>
<div class="a t" style="left:1337px;top:762.92px;font-size:6.2px;color:#14532d;font-weight:bold"><span class="k">운송</span> x1</div>
<div class="a" style="left:1546px;top:849.8px;width:39.5px;height:14.200000000000045px;border-radius:8px;border:1.5px solid #22c55e;background:rgba(255,255,255,.85)"></div>
<svg class="a" style="left:1550.75px;top:853.65px" width="6.5" height="6.5" viewBox="0 0 24 24" fill="none" stroke="#15803d" stroke-width="2.4" stroke-linecap="round" stroke-linejoin="round" ><path d="M14 18V6a2 2 0 0 0-2-2H4a2 2 0 0 0-2 2v11a1 1 0 0 0 1 1h2"/><path d="M15 18H9"/><path d="M19 18h2a1 1 0 0 0 1-1v-3.65a1 1 0 0 0-.22-.624l-3.48-4.35A1 1 0 0 0 17.52 8H14"/><circle cx="17" cy="18" r="2"/><circle cx="7" cy="18" r="2"/></svg>
<div class="a t" style="left:1559px;top:854.72px;font-size:6.2px;color:#14532d;font-weight:bold"><span class="k">운송</span> x3</div>
<div class="a" style="left:1324px;top:818.3px;width:42.200000000000045px;height:14.200000000000045px;border-radius:8px;border:1px solid #d1d5db;background:rgba(255,255,255,.9);box-shadow:0 1px 2px rgba(0,0,0,.08)"></div>
<svg class="a" style="left:1328.75px;top:822.15px" width="6.5" height="6.5" viewBox="0 0 24 24" fill="none" stroke="#6b7280" stroke-width="2.4" stroke-linecap="round" stroke-linejoin="round" ><path d="M14 18V6a2 2 0 0 0-2-2H4a2 2 0 0 0-2 2v11a1 1 0 0 0 1 1h2"/><path d="M15 18H9"/><path d="M19 18h2a1 1 0 0 0 1-1v-3.65a1 1 0 0 0-.22-.624l-3.48-4.35A1 1 0 0 0 17.52 8H14"/><circle cx="17" cy="18" r="2"/><circle cx="7" cy="18" r="2"/></svg>
<div class="a t" style="left:1337px;top:823.22px;font-size:6.2px;color:#374151;font-weight:bold"><span class="k">운송 없음</span></div>
<div class="a" style="left:1542px;top:789.6px;width:42px;height:13.899999999999977px;border-radius:8px;border:1px solid #d1d5db;background:rgba(255,255,255,.9);box-shadow:0 1px 2px rgba(0,0,0,.08)"></div>
<svg class="a" style="left:1546.75px;top:793.3px" width="6.5" height="6.5" viewBox="0 0 24 24" fill="none" stroke="#6b7280" stroke-width="2.4" stroke-linecap="round" stroke-linejoin="round" ><path d="M14 18V6a2 2 0 0 0-2-2H4a2 2 0 0 0-2 2v11a1 1 0 0 0 1 1h2"/><path d="M15 18H9"/><path d="M19 18h2a1 1 0 0 0 1-1v-3.65a1 1 0 0 0-.22-.624l-3.48-4.35A1 1 0 0 0 17.52 8H14"/><circle cx="17" cy="18" r="2"/><circle cx="7" cy="18" r="2"/></svg>
<div class="a t" style="left:1555px;top:794.37px;font-size:6.2px;color:#374151;font-weight:bold"><span class="k">운송 없음</span></div>
<svg class="a" style="left:0;top:0" width="1920" height="1149" viewBox="0 0 1920 1149">
<path d="M1287.5 776.5 C1340 776.5 1345 753.7 1393 753.7" fill="none" stroke="#22b573" stroke-width="1.6"/>
<path d="M1505.6 874.3 C1565 874.3 1565 839.5 1618 839.5" fill="none" stroke="#22b573" stroke-width="1.6"/>
<path d="M1287.5 776.5 C1345 776.5 1345 874.3 1395 874.3" fill="none" stroke="#71809a" stroke-width="1.15" stroke-dasharray="3.6 2.8"/>
<path d="M1500.5 753.7 C1563 753.7 1563 839.5 1618 839.5" fill="none" stroke="#71809a" stroke-width="1.15" stroke-dasharray="3.6 2.8"/>
<path d="M1391.5 749 L1399 753.7 L1391.5 758.4 Z" fill="#a3a3a3"/>
<path d="M1394.5 869.6 L1402 874.3 L1394.5 879 Z" fill="#a3a3a3"/>
<path d="M1617.5 834.8 L1625 839.5 L1617.5 844.2 Z" fill="#a3a3a3"/>
</svg>
<div class="a" style="left:1190.1px;top:748.7px;width:97.40000000000009px;height:55.39999999999998px;border-radius:4px;background:#fff;border:1px solid #eceef1;box-shadow:0 1px 3px rgba(0,0,0,.08)"></div>
<div class="a t" style="left:1198.8px;top:757.9px;font-size:7.5px;color:#1f2937;font-weight:bold"><span class="k">공정</span> 1</div>
<svg class="a" style="left:1270.0px;top:756.7px" width="8" height="8" viewBox="0 0 24 24" fill="none" stroke="#6b7280" stroke-width="2.6" stroke-linecap="round" stroke-linejoin="round" ><circle cx="12" cy="5" r="1"/><circle cx="12" cy="12" r="1"/><circle cx="12" cy="19" r="1"/></svg>
<div class="a t" style="left:1198.8px;top:769.13px;font-size:6.6px;color:#9ca3af">PROC-001</div>
<div class="a t" style="left:1198.8px;top:783.32px;font-size:6.2px;color:#6b7280"><span class="k">헤딩</span></div>
<div class="a" style="left:1188.5px;top:774.9px;width:3.2px;height:3.2px;border-radius:50%;background:#2563eb"></div>
<div class="a" style="left:1285.9px;top:774.9px;width:3.2px;height:3.2px;border-radius:50%;background:#2563eb"></div>
<div class="a" style="left:1282.0px;top:756.8px;width:11px;height:11px;border-radius:50%;background:#2b7fff;box-shadow:0 1px 2px rgba(0,0,0,.25)"></div>
<svg class="a" style="left:1283.25px;top:758.05px" width="8.5" height="8.5" viewBox="0 0 24 24" fill="none" stroke="#fff" stroke-width="2.8" stroke-linecap="round" stroke-linejoin="round" ><path d="M5 12h14"/><path d="M12 5v14"/></svg>
<div class="a" style="left:1399.9px;top:705.3px;width:100.59999999999991px;height:97.40000000000009px;border-radius:4px;background:#fff;border:1px solid #eceef1;box-shadow:0 1px 3px rgba(0,0,0,.08)"></div>
<div class="a t" style="left:1408.6000000000001px;top:714.5px;font-size:7.5px;color:#1f2937;font-weight:bold"><span class="k">공정</span> 2</div>
<svg class="a" style="left:1483.0px;top:713.3px" width="8" height="8" viewBox="0 0 24 24" fill="none" stroke="#6b7280" stroke-width="2.6" stroke-linecap="round" stroke-linejoin="round" ><circle cx="12" cy="5" r="1"/><circle cx="12" cy="12" r="1"/><circle cx="12" cy="19" r="1"/></svg>
<div class="a t" style="left:1408.6000000000001px;top:725.73px;font-size:6.6px;color:#9ca3af">PROC-002</div>
<div class="a t" style="left:1408.6000000000001px;top:739.92px;font-size:6.2px;color:#6b7280"><span class="k">절단</span></div>
<svg class="a" style="left:1407.8500000000001px;top:755.25px" width="6.5" height="6.5" viewBox="0 0 24 24" fill="none" stroke="#6b7280" stroke-width="2.2" stroke-linecap="round" stroke-linejoin="round" ><path d="M11 21.73a2 2 0 0 0 2 0l7-4A2 2 0 0 0 21 16V8a2 2 0 0 0-1-1.73l-7-4a2 2 0 0 0-2 0l-7 4A2 2 0 0 0 3 8v8a2 2 0 0 0 1 1.73z"/><path d="M12 22V12"/><path d="m3.3 7 7.703 4.734a2 2 0 0 0 1.994 0L20.7 7"/><path d="m7.5 4.27 9 5.15"/></svg>
<div class="a t" style="left:1417.1000000000001px;top:756.18px;font-size:6.5px;color:#6b7280">4</div>
<svg class="a" style="left:1427.8500000000001px;top:755.25px" width="6.5" height="6.5" viewBox="0 0 24 24" fill="none" stroke="#6b7280" stroke-width="2.2" stroke-linecap="round" stroke-linejoin="round" ><path d="M3 6h18"/><path d="M19 6v14c0 1-1 2-2 2H7c-1 0-2-1-2-2V6"/><path d="M8 6V4c0-1 1-2 2-2h4c1 0 2 1 2 2v2"/><path d="M10 11v6"/><path d="M14 11v6"/></svg>
<div class="a t" style="left:1437.1000000000001px;top:756.18px;font-size:6.5px;color:#6b7280">0</div>
<svg class="a" style="left:1446.8500000000001px;top:755.25px" width="6.5" height="6.5" viewBox="0 0 24 24" fill="none" stroke="#6b7280" stroke-width="2.2" stroke-linecap="round" stroke-linejoin="round" ><path d="M4 14a1 1 0 0 1-.78-1.63l9.9-10.2a.5.5 0 0 1 .86.46l-1.92 6.02A1 1 0 0 0 13 10h7a1 1 0 0 1 .78 1.63l-9.9 10.2a.5.5 0 0 1-.86-.46l1.92-6.02A1 1 0 0 0 11 14z"/></svg>
<div class="a t" style="left:1456.6000000000001px;top:756.18px;font-size:6.5px;color:#6b7280">0</div>
<div class="a" style="left:1408.6000000000001px;top:767.0px;width:83.59999999999991px;height:0.8px;background:#eef0f2"></div>
<svg class="a" style="left:1408.3500000000001px;top:774.75px" width="6.5" height="6.5" viewBox="0 0 24 24" fill="none" stroke="#f97316" stroke-width="2.4" stroke-linecap="round" stroke-linejoin="round" ><path d="m16 16 3-8 3 8c-.87.65-1.92 1-3 1s-2.13-.35-3-1Z"/><path d="m2 16 3-8 3 8c-.87.65-1.92 1-3 1s-2.13-.35-3-1Z"/><path d="M7 21h10"/><path d="M12 3v18"/><path d="M3 7h2c2 0 5-1 7-2 2 1 5 2 7 2h2"/></svg>
<div class="a t" style="left:1418.6000000000001px;top:775.82px;font-size:6.2px;color:#4b5563">Mass Balance</div>
<div class="a" style="left:1461.2px;top:772.2px;width:30.5px;height:11.6px;border-radius:6px;background:#fffbeb;border:1px solid #fcd99a"></div>
<div class="a t" style="left:1076.45px;width:800px;text-align:center;top:775.78px;font-size:6.3px;color:#c2410c;font-weight:bold">60.0%</div>
<div class="a t" style="left:1408.6000000000001px;top:789.33px;font-size:6.4px;color:#6b7280"><span class="k">입력</span>:</div>
<div class="a t" style="left:1423.8000000000002px;top:789.14px;font-size:6.8px;color:#1f2937;font-weight:bold">2.00 kg</div>
<div class="a t" style="left:1453.4px;top:789.33px;font-size:6.4px;color:#6b7280"><span class="k">출력</span>:</div>
<div class="a t" style="left:1468.0000000000002px;top:789.14px;font-size:6.8px;color:#1f2937;font-weight:bold">0.80 kg</div>
<div class="a" style="left:1398.3000000000002px;top:752.1px;width:3.2px;height:3.2px;border-radius:50%;background:#2563eb"></div>
<div class="a" style="left:1498.9px;top:752.1px;width:3.2px;height:3.2px;border-radius:50%;background:#2563eb"></div>
<div class="a" style="left:1495.0px;top:724.1px;width:11px;height:11px;border-radius:50%;background:#2b7fff;box-shadow:0 1px 2px rgba(0,0,0,.25)"></div>
<svg class="a" style="left:1496.25px;top:725.35px" width="8.5" height="8.5" viewBox="0 0 24 24" fill="none" stroke="#fff" stroke-width="2.8" stroke-linecap="round" stroke-linejoin="round" ><path d="M5 12h14"/><path d="M12 5v14"/></svg>
<div class="a" style="left:1402.9px;top:834.2px;width:103.09999999999991px;height:79.79999999999995px;border-radius:4px;background:#fff;border:1px solid #eceef1;box-shadow:0 1px 3px rgba(0,0,0,.08)"></div>
<div class="a t" style="left:1411.6000000000001px;top:843.4px;font-size:7.5px;color:#1f2937;font-weight:bold"><span class="k">공정</span> 3</div>
<svg class="a" style="left:1488.5px;top:842.2px" width="8" height="8" viewBox="0 0 24 24" fill="none" stroke="#6b7280" stroke-width="2.6" stroke-linecap="round" stroke-linejoin="round" ><circle cx="12" cy="5" r="1"/><circle cx="12" cy="12" r="1"/><circle cx="12" cy="19" r="1"/></svg>
<div class="a t" style="left:1411.6000000000001px;top:854.63px;font-size:6.6px;color:#9ca3af">PROC-003</div>
<svg class="a" style="left:1410.8500000000001px;top:866.1500000000001px" width="6.5" height="6.5" viewBox="0 0 24 24" fill="none" stroke="#6b7280" stroke-width="2.2" stroke-linecap="round" stroke-linejoin="round" ><path d="M11 21.73a2 2 0 0 0 2 0l7-4A2 2 0 0 0 21 16V8a2 2 0 0 0-1-1.73l-7-4a2 2 0 0 0-2 0l-7 4A2 2 0 0 0 3 8v8a2 2 0 0 0 1 1.73z"/><path d="M12 22V12"/><path d="m3.3 7 7.703 4.734a2 2 0 0 0 1.994 0L20.7 7"/><path d="m7.5 4.27 9 5.15"/></svg>
<div class="a t" style="left:1420.1000000000001px;top:867.08px;font-size:6.5px;color:#6b7280">1</div>
<svg class="a" style="left:1430.8500000000001px;top:866.1500000000001px" width="6.5" height="6.5" viewBox="0 0 24 24" fill="none" stroke="#6b7280" stroke-width="2.2" stroke-linecap="round" stroke-linejoin="round" ><path d="M3 6h18"/><path d="M19 6v14c0 1-1 2-2 2H7c-1 0-2-1-2-2V6"/><path d="M8 6V4c0-1 1-2 2-2h4c1 0 2 1 2 2v2"/><path d="M10 11v6"/><path d="M14 11v6"/></svg>
<div class="a t" style="left:1440.1000000000001px;top:867.08px;font-size:6.5px;color:#6b7280">0</div>
<svg class="a" style="left:1449.8500000000001px;top:866.1500000000001px" width="6.5" height="6.5" viewBox="0 0 24 24" fill="none" stroke="#6b7280" stroke-width="2.2" stroke-linecap="round" stroke-linejoin="round" ><path d="M4 14a1 1 0 0 1-.78-1.63l9.9-10.2a.5.5 0 0 1 .86.46l-1.92 6.02A1 1 0 0 0 13 10h7a1 1 0 0 1 .78 1.63l-9.9 10.2a.5.5 0 0 1-.86-.46l1.92-6.02A1 1 0 0 0 11 14z"/></svg>
<div class="a t" style="left:1459.6000000000001px;top:867.08px;font-size:6.5px;color:#6b7280">0</div>
<div class="a" style="left:1411.6000000000001px;top:877.9000000000001px;width:86.09999999999991px;height:0.8px;background:#eef0f2"></div>
<svg class="a" style="left:1411.3500000000001px;top:885.6500000000001px" width="6.5" height="6.5" viewBox="0 0 24 24" fill="none" stroke="#22c55e" stroke-width="2.4" stroke-linecap="round" stroke-linejoin="round" ><path d="m16 16 3-8 3 8c-.87.65-1.92 1-3 1s-2.13-.35-3-1Z"/><path d="m2 16 3-8 3 8c-.87.65-1.92 1-3 1s-2.13-.35-3-1Z"/><path d="M7 21h10"/><path d="M12 3v18"/><path d="M3 7h2c2 0 5-1 7-2 2 1 5 2 7 2h2"/></svg>
<div class="a t" style="left:1421.6000000000001px;top:886.72px;font-size:6.2px;color:#4b5563">Mass Balance</div>
<div class="a" style="left:1464.2px;top:883.1000000000001px;width:33.3px;height:11.6px;border-radius:6px;background:#f0fdf4;border:1px solid #b7efc8"></div>
<div class="a t" style="left:1080.8500000000001px;width:800px;text-align:center;top:886.68px;font-size:6.3px;color:#15803d;font-weight:bold">100.0%</div>
<div class="a t" style="left:1411.6000000000001px;top:900.23px;font-size:6.4px;color:#6b7280"><span class="k">입력</span>:</div>
<div class="a t" style="left:1426.8000000000002px;top:900.04px;font-size:6.8px;color:#1f2937;font-weight:bold">1.00 kg</div>
<div class="a t" style="left:1456.4px;top:900.23px;font-size:6.4px;color:#6b7280"><span class="k">출력</span>:</div>
<div class="a t" style="left:1471.0000000000002px;top:900.04px;font-size:6.8px;color:#1f2937;font-weight:bold">0.00 kg</div>
<div class="a" style="left:1401.3000000000002px;top:872.6999999999999px;width:3.2px;height:3.2px;border-radius:50%;background:#2563eb"></div>
<div class="a" style="left:1504.4px;top:872.6999999999999px;width:3.2px;height:3.2px;border-radius:50%;background:#2563eb"></div>
<div class="a" style="left:1500.5px;top:848.9px;width:11px;height:11px;border-radius:50%;background:#2b7fff;box-shadow:0 1px 2px rgba(0,0,0,.25)"></div>
<svg class="a" style="left:1501.75px;top:850.15px" width="8.5" height="8.5" viewBox="0 0 24 24" fill="none" stroke="#fff" stroke-width="2.8" stroke-linecap="round" stroke-linejoin="round" ><path d="M5 12h14"/><path d="M12 5v14"/></svg>
<div class="a" style="left:1625.8px;top:800px;width:97.90000000000009px;height:79px;border-radius:4px;background:#fff;border:1px solid #eceef1;box-shadow:0 1px 3px rgba(0,0,0,.08)"></div>
<div class="a t" style="left:1634.5px;top:809.2px;font-size:7.5px;color:#1f2937;font-weight:bold"><span class="k">공정</span> 4</div>
<svg class="a" style="left:1706.2px;top:808.0px" width="8" height="8" viewBox="0 0 24 24" fill="none" stroke="#6b7280" stroke-width="2.6" stroke-linecap="round" stroke-linejoin="round" ><circle cx="12" cy="5" r="1"/><circle cx="12" cy="12" r="1"/><circle cx="12" cy="19" r="1"/></svg>
<div class="a t" style="left:1634.5px;top:820.43px;font-size:6.6px;color:#9ca3af">PROC-004</div>
<svg class="a" style="left:1633.75px;top:831.95px" width="6.5" height="6.5" viewBox="0 0 24 24" fill="none" stroke="#6b7280" stroke-width="2.2" stroke-linecap="round" stroke-linejoin="round" ><path d="M11 21.73a2 2 0 0 0 2 0l7-4A2 2 0 0 0 21 16V8a2 2 0 0 0-1-1.73l-7-4a2 2 0 0 0-2 0l-7 4A2 2 0 0 0 3 8v8a2 2 0 0 0 1 1.73z"/><path d="M12 22V12"/><path d="m3.3 7 7.703 4.734a2 2 0 0 0 1.994 0L20.7 7"/><path d="m7.5 4.27 9 5.15"/></svg>
<div class="a t" style="left:1643.0px;top:832.88px;font-size:6.5px;color:#6b7280">3</div>
<svg class="a" style="left:1653.75px;top:831.95px" width="6.5" height="6.5" viewBox="0 0 24 24" fill="none" stroke="#6b7280" stroke-width="2.2" stroke-linecap="round" stroke-linejoin="round" ><path d="M3 6h18"/><path d="M19 6v14c0 1-1 2-2 2H7c-1 0-2-1-2-2V6"/><path d="M8 6V4c0-1 1-2 2-2h4c1 0 2 1 2 2v2"/><path d="M10 11v6"/><path d="M14 11v6"/></svg>
<div class="a t" style="left:1663.0px;top:832.88px;font-size:6.5px;color:#6b7280">1</div>
<svg class="a" style="left:1672.75px;top:831.95px" width="6.5" height="6.5" viewBox="0 0 24 24" fill="none" stroke="#6b7280" stroke-width="2.2" stroke-linecap="round" stroke-linejoin="round" ><path d="M4 14a1 1 0 0 1-.78-1.63l9.9-10.2a.5.5 0 0 1 .86.46l-1.92 6.02A1 1 0 0 0 13 10h7a1 1 0 0 1 .78 1.63l-9.9 10.2a.5.5 0 0 1-.86-.46l1.92-6.02A1 1 0 0 0 11 14z"/></svg>
<div class="a t" style="left:1682.5px;top:832.88px;font-size:6.5px;color:#6b7280">0</div>
<div class="a" style="left:1634.5px;top:843.7px;width:80.90000000000009px;height:0.8px;background:#eef0f2"></div>
<svg class="a" style="left:1634.25px;top:851.45px" width="6.5" height="6.5" viewBox="0 0 24 24" fill="none" stroke="#22c55e" stroke-width="2.4" stroke-linecap="round" stroke-linejoin="round" ><path d="m16 16 3-8 3 8c-.87.65-1.92 1-3 1s-2.13-.35-3-1Z"/><path d="m2 16 3-8 3 8c-.87.65-1.92 1-3 1s-2.13-.35-3-1Z"/><path d="M7 21h10"/><path d="M12 3v18"/><path d="M3 7h2c2 0 5-1 7-2 2 1 5 2 7 2h2"/></svg>
<div class="a t" style="left:1644.5px;top:852.52px;font-size:6.2px;color:#4b5563">Mass Balance</div>
<div class="a" style="left:1687.1px;top:848.9000000000001px;width:28.7px;height:11.6px;border-radius:6px;background:#f0fdf4;border:1px solid #b7efc8"></div>
<div class="a t" style="left:1301.4499999999998px;width:800px;text-align:center;top:852.48px;font-size:6.3px;color:#15803d;font-weight:bold">91.1%</div>
<div class="a t" style="left:1634.5px;top:866.03px;font-size:6.4px;color:#6b7280"><span class="k">입력</span>:</div>
<div class="a t" style="left:1649.7px;top:865.84px;font-size:6.8px;color:#1f2937;font-weight:bold">5.60 kg</div>
<div class="a t" style="left:1679.3px;top:866.03px;font-size:6.4px;color:#6b7280"><span class="k">출력</span>:</div>
<div class="a t" style="left:1693.9px;top:865.84px;font-size:6.8px;color:#1f2937;font-weight:bold">0.00 kg</div>
<div class="a" style="left:1624.2px;top:837.9px;width:3.2px;height:3.2px;border-radius:50%;background:#2563eb"></div>
<div class="a" style="left:1722.1000000000001px;top:837.9px;width:3.2px;height:3.2px;border-radius:50%;background:#2563eb"></div>
<div class="a" style="left:1718.2px;top:814.1px;width:11px;height:11px;border-radius:50%;background:#2b7fff;box-shadow:0 1px 2px rgba(0,0,0,.25)"></div>
<svg class="a" style="left:1719.45px;top:815.35px" width="8.5" height="8.5" viewBox="0 0 24 24" fill="none" stroke="#fff" stroke-width="2.8" stroke-linecap="round" stroke-linejoin="round" ><path d="M5 12h14"/><path d="M12 5v14"/></svg>
<div class="a" style="left:999px;top:708px;width:9.7px;height:12.8px;background:#e5e7eb;border-radius:3px"></div>
<div class="a" style="left:1001.8px;top:711.7px;width:1.5px;height:1.5px;background:#1f2937"></div>
<div class="a" style="left:1004.5px;top:711.7px;width:1.5px;height:1.5px;background:#1f2937"></div>
<div class="a" style="left:1001.8px;top:714.2px;width:1.5px;height:1.5px;background:#1f2937"></div>
<div class="a" style="left:1004.5px;top:714.2px;width:1.5px;height:1.5px;background:#1f2937"></div>
<div class="a" style="left:1001.8px;top:716.7px;width:1.5px;height:1.5px;background:#1f2937"></div>
<div class="a" style="left:1004.5px;top:716.7px;width:1.5px;height:1.5px;background:#1f2937"></div>
</div></div></body></html>
